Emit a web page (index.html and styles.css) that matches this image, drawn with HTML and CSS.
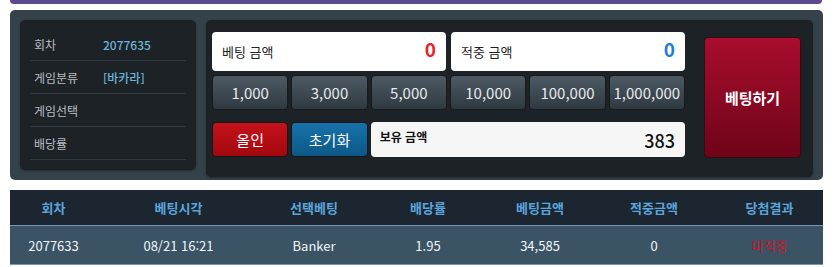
FILE: index.html
```html
<!DOCTYPE html>
<html lang="ko">
<head>
<meta charset="utf-8">
<link rel="stylesheet" href="styles.css">
</head>
<body>
<div class="topbar"></div>
<div class="panel">
  <div class="info">
    <div class="info-row"><span class="lbl">회차</span><span class="val">2077635</span></div>
    <div class="info-row"><span class="lbl">게임분류</span><span class="val">[바카라]</span></div>
    <div class="info-row"><span class="lbl">게임선택</span><span class="val"></span></div>
    <div class="info-row"><span class="lbl">배당률</span><span class="val"></span></div>
  </div>
  <div class="bet">
    <div class="bet-main">
      <div class="row-inputs">
        <div class="field"><span class="field-lbl">베팅 금액</span><span class="num red">0</span></div>
        <div class="field"><span class="field-lbl">적중 금액</span><span class="num blue">0</span></div>
      </div>
      <div class="row-chips">
        <button class="chip">1,000</button>
        <button class="chip">3,000</button>
        <button class="chip">5,000</button>
        <button class="chip">10,000</button>
        <button class="chip">100,000</button>
        <button class="chip">1,000,000</button>
      </div>
      <div class="row-bottom">
        <button class="act allin">올인</button>
        <button class="act reset">초기화</button>
        <div class="field hold"><span class="hold-lbl">보유 금액</span><span class="num dark">383</span></div>
      </div>
    </div>
    <button class="bet-btn">베팅하기</button>
  </div>
</div>
<div class="table">
  <div class="thead">
    <div>회차</div><div>베팅시각</div><div>선택베팅</div><div>배당률</div><div>베팅금액</div><div>적중금액</div><div>당첨결과</div>
  </div>
  <div class="trow">
    <div>2077633</div><div>08/21 16:21</div><div>Banker</div><div>1.95</div><div>34,585</div><div>0</div><div class="lose">미적중</div>
  </div>
</div>
</body>
</html>
```
FILE: styles.css
```css
* { box-sizing: border-box; }
body {
  margin: 0;
  background: #ffffff;
  font-family: "Noto Sans CJK KR", "Noto Sans", sans-serif;
  width: 835px;
  height: 267px;
  overflow: hidden;
}
.topbar {
  margin-left: 10px;
  width: 812px;
  height: 4px;
  background: #5b4b8c;
  border-radius: 0 0 4px 4px;
}
.panel {
  margin: 6px 0 0 10px;
  width: 813px;
  height: 170px;
  background: #36424a;
  border-radius: 5px;
  padding: 10px 10px 3px 10px;
  display: flex;
  align-items: flex-start;
  gap: 10px;
}
.info {
  width: 176px;
  height: 150px;
  background: #1d2226;
  border-radius: 5px;
  padding: 8px 10px 0 10px;
  box-shadow: 0 1px 3px rgba(0,0,0,0.35);
}
.info-row {
  height: 33px;
  display: flex;
  align-items: center;
  border-bottom: 1px solid #343b40;
  padding-left: 4px;
  font-size: 12px;
}
.lbl { width: 69px; color: #b8bec2; }
.val { color: #6bb4d8; font-weight: 500; }
.bet {
  width: 607px;
  height: 157px;
  background: #1d2226;
  border-radius: 5px;
  padding: 12px 12px 0 6px;
  display: flex;
  gap: 19px;
  box-shadow: 0 1px 3px rgba(0,0,0,0.35);
}
.bet-main { width: 473px; }
.row-inputs, .row-chips, .row-bottom {
  display: grid;
  grid-template-columns: repeat(6, 1fr);
  gap: 3px;
}
.row-inputs { height: 39px; column-gap: 5px; }
.row-chips { height: 35px; margin-top: 4px; }
.row-bottom { height: 35px; margin-top: 12px; }
.field {
  grid-column: span 3;
  background: #ffffff;
  border-radius: 4px;
  display: flex;
  align-items: center;
  justify-content: space-between;
  padding: 0 10px 0 10px;
}
.field-lbl { font-size: 13px; color: #222; }
.num { font-size: 19px; font-weight: 700; line-height: 1; margin-top: -6px; }
.red { color: #e3262b; }
.blue { color: #1f7ce0; }
.hold {
  grid-column: span 4;
  background: #f6f6f6;
  padding: 0 10px 0 9px;
}
.hold-lbl { font-size: 12px; font-weight: 700; color: #111; margin-top: -6px; }
.dark { color: #111; font-size: 18px; font-weight: 500; margin-top: 0; }
button {
  font-family: inherit;
  margin: 0;
  padding: 0;
  cursor: pointer;
}
.chip {
  border: 1px solid #171b1e;
  border-radius: 4px;
  background: linear-gradient(#4d5a64, #2f3940);
  color: #e6e9eb;
  font-size: 15px;
}
.act {
  border: 1px solid #14181b;
  border-radius: 4px;
  color: #ffffff;
  font-size: 15px;
}
.allin { background: linear-gradient(#c5121b, #a3080e); }
.reset { background: linear-gradient(#1772aa, #0c5886); }
.bet-btn {
  width: 97px;
  height: 121px;
  margin-top: 5px;
  border: 1px solid #3a0a12;
  border-radius: 4px;
  background: linear-gradient(#a80d2e, #6e0418);
  color: #ffffff;
  font-size: 15px;
  font-weight: 700;
}
.table {
  margin: 10px 0 0 10px;
  width: 813px;
}
.thead, .trow {
  display: grid;
  grid-template-columns: 87px 163px 108px 120px 104px 124px 107px;
  text-align: center;
  align-items: center;
}
.thead {
  height: 35px;
  background: #1b2630;
  color: #5ba5dc;
  font-size: 13px;
  font-weight: 700;
}
.trow {
  height: 40px;
  background: #3a5466;
  border-top: 1px solid #6f99b5;
  border-bottom: 1px solid #6f99b5;
  color: #f2f4f5;
  font-size: 13px;
}
.lose { color: #d8101e; }
```
